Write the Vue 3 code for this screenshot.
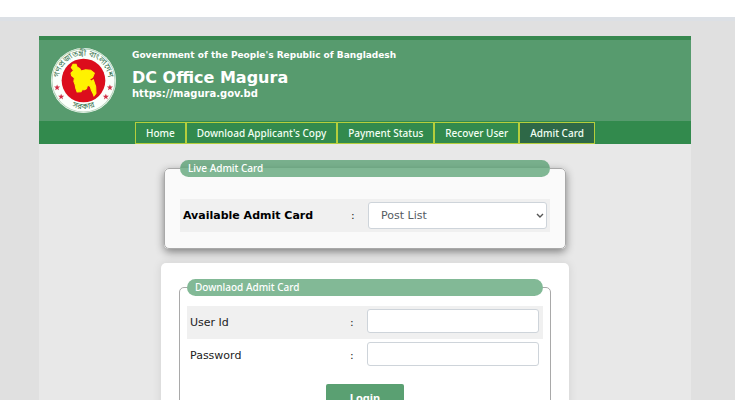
<script setup>
import { ref } from "vue";

const navItems = [
    { label: "Home", active: false },
    { label: "Download Applicant's Copy", active: false },
    { label: "Payment Status", active: false },
    { label: "Recover User", active: false },
    { label: "Admit Card", active: true },
];

const stars = [
    { x: 6, y: 39 },
    { x: 10, y: 48 },
    { x: 58, y: 39 },
    { x: 54, y: 48 },
];

const post = ref("");
const userId = ref("");
const password = ref("");
</script>

<template>
    <div class="page">
        <div class="wrapper">
            <header class="header">
                <svg
                    class="logo"
                    viewBox="0 0 64 64"
                    role="img"
                    aria-label="Government seal"
                >
                    <defs>
                        <path id="seal-top" d="M7.8 36 A24.5 24.5 0 1 1 56.2 36" />
                        <path id="seal-bottom" d="M8 47 A28.5 28.5 0 0 0 56 47" />
                    </defs>
                    <circle cx="32" cy="32" r="32" fill="#fbfffb" />
                    <circle
                        cx="32"
                        cy="32"
                        r="31"
                        fill="none"
                        stroke="#b7d5bd"
                        stroke-width="1"
                    />
                    <circle cx="32" cy="32" r="21.5" fill="#dc0d1c" />
                    <path
                        d="M21.7 16 L24.7 16 L25.7 18.7 L28.3 20.2 L29.7 22.7 L34 21.5 L39 22 L42.7 24.7 L41 29 L38.3 30.7 L39 33 L41.7 31.3 L44 38 L44.3 44.7 L42.3 47.3 L41 44 L39.7 41.3 L38.7 38 L36 36.5 L35 40 L33 41 L30.7 41 L29.5 43 L25.7 43.3 L24.5 40 L23.7 36 L22.5 33 L23 29.5 L20.3 27.3 L19.7 24.7 L22.3 22 L20 19.3 Z"
                        fill="#fff200"
                        stroke="#fff200"
                        stroke-width="1"
                    />
                    <text class="seal-text">
                        <textPath
                            href="#seal-top"
                            startOffset="50%"
                            text-anchor="middle"
                        >গণপ্রজাতন্ত্রী বাংলাদেশ</textPath>
                    </text>
                    <text class="seal-text">
                        <textPath
                            href="#seal-bottom"
                            startOffset="50%"
                            text-anchor="middle"
                        >সরকার</textPath>
                    </text>
                    <path
                        v-for="star in stars"
                        :key="`${star.x}-${star.y}`"
                        :transform="`translate(${star.x} ${star.y})`"
                        d="M0 -3 L0.8 -1 L3 -1 L1.2 0.5 L1.9 2.6 L0 1.3 L-1.9 2.6 L-1.2 0.5 L-3 -1 L-0.8 -1 Z"
                        fill="#cf2f45"
                    />
                </svg>
                <div class="titles">
                    <p class="title-small title-gov">
                        Government of the People's Republic of Bangladesh
                    </p>
                    <h1 class="title">DC Office Magura</h1>
                    <p class="title-small">https://magura.gov.bd</p>
                </div>
            </header>

            <nav class="nav">
                <a
                    v-for="item in navItems"
                    :key="item.label"
                    href="#"
                    class="nav-link"
                    :class="{ 'nav-link-active': item.active }"
                    >{{ item.label }}</a
                >
            </nav>

            <main class="content">
                <fieldset class="panel live-panel">
                    <legend class="legend">Live Admit Card</legend>
                    <div class="row row-shaded row-live">
                        <label class="label label-bold" for="post"
                            >Available Admit Card</label
                        >
                        <span class="colon">:</span>
                        <span class="select-wrap">
                            <select id="post" v-model="post" class="control select">
                                <option value="">Post List</option>
                            </select>
                            <svg class="chevron" viewBox="0 0 8 6" aria-hidden="true">
                                <path
                                    d="M1 1 L4 4 L7 1"
                                    fill="none"
                                    stroke="#555"
                                    stroke-width="1.4"
                                />
                            </svg>
                        </span>
                    </div>
                </fieldset>

                <form class="card" @submit.prevent>
                    <fieldset class="panel login-panel">
                        <legend class="legend">Downlaod Admit Card</legend>
                        <div class="row row-shaded">
                            <label class="label" for="user-id">User Id</label>
                            <span class="colon">:</span>
                            <input
                                id="user-id"
                                v-model="userId"
                                class="control text-input"
                                type="text"
                            />
                        </div>
                        <div class="row">
                            <label class="label" for="password">Password</label>
                            <span class="colon">:</span>
                            <input
                                id="password"
                                v-model="password"
                                class="control text-input"
                                type="password"
                            />
                        </div>
                        <button class="login" type="submit">Login</button>
                    </fieldset>
                </form>
            </main>
        </div>
    </div>
</template>

<style>
body {
    margin: 0;
    background: #e0e0e0;
}
</style>

<style scoped>
.page {
    border-top: 17px solid #ffffff;
    padding: 0 44px 0 39px;
    font-family: "DejaVu Sans", Verdana, sans-serif;
    box-shadow: inset 0 4px 0 #dce0e5;
    background: #e0e0e0;
}

.wrapper {
    border-top: 19px solid transparent;
    background: #e8e8e8;
    background-clip: padding-box;
}

.header {
    display: flex;
    align-items: flex-start;
    gap: 16px;
    height: 73px;
    padding: 8px 12px 0;
    border-top: 4px solid #37884f;
    background: #579b6e;
}

.logo {
    flex: none;
    width: 65px;
    height: 65px;
}

.seal-text {
    font-family: "Noto Sans Bengali", "Noto Sans", sans-serif;
    font-size: 8px;
    fill: #3c7551;
}

.titles {
    color: #ffffff;
}

.title-small {
    margin: 0;
    font-size: 10px;
    font-weight: 700;
    line-height: 14px;
}

.title-gov {
    font-size: 9px;
}

.title {
    margin: 7px 0 0;
    font-size: 16px;
    font-weight: 700;
    line-height: 18px;
}

.nav {
    display: flex;
    height: 22px;
    padding: 1px 0 0 96px;
    background: #328a4d;
}

.nav-link {
    padding: 0 10px;
    border: 1px solid #b5ce3c;
    color: #f2fff4;
    font-family: "Noto Sans", sans-serif;
    font-size: 10px;
    font-weight: 500;
    line-height: 20px;
    text-decoration: none;
}

.nav-link-active {
    background: #2e6847;
}

.content {
    max-width: 408px;
    margin: 0 auto;
    padding: 16px 0 24px;
}

.panel {
    min-width: 0;
    margin: 0;
    border: 1px solid #a9a9a9;
    border-radius: 5px;
}

.live-panel {
    margin: 0 3px;
    padding: 22px 15px 16px;
    background: #fafafa;
    box-shadow: 0 3px 8px rgba(0, 0, 0, 0.45);
}

.legend {
    box-sizing: border-box;
    width: 100%;
    padding: 0 8px;
    border-radius: 9px;
    background: rgba(46, 139, 80, 0.6);
    color: #ffffff;
    font-family: "Noto Sans", sans-serif;
    font-size: 10px;
    font-weight: 500;
    line-height: 17px;
}

.row {
    display: flex;
    align-items: center;
    height: 33px;
    padding: 0 4px 0 3px;
    font-size: 11px;
    color: #222222;
}

.row-live {
    padding-right: 3px;
}

.row-shaded {
    background: #f0f0f0;
}

.label {
    flex: 1;
}

.label-bold {
    font-weight: 700;
    color: #000000;
}

.colon {
    width: 17px;
}

.control {
    box-sizing: border-box;
    padding: 0 12px;
    border: 1px solid #ced4da;
    border-radius: 3px;
    background: #ffffff;
    color: #555b61;
    font-family: inherit;
    font-size: 11px;
}

.text-input {
    align-self: flex-start;
    width: 172px;
    height: 24px;
    margin-top: 3px;
}

.select-wrap {
    position: relative;
    display: flex;
}

.select {
    width: 179px;
    height: 27px;
    appearance: none;
}

.chevron {
    position: absolute;
    top: 11px;
    right: 3px;
    width: 8px;
    height: 6px;
    pointer-events: none;
}

.card {
    margin-top: 14px;
    padding: 16px 18px 20px;
    border-radius: 5px;
    background: #ffffff;
    box-shadow: 0 0 10px rgba(0, 0, 0, 0.1);
}

.login-panel {
    padding: 10px 7px 16px;
}

.login {
    display: block;
    width: 78px;
    height: 27px;
    margin: 12px auto 0;
    border: 0;
    border-radius: 2px;
    background: #5aa072;
    color: #ffffff;
    font-family: "Noto Sans", sans-serif;
    font-size: 11px;
    font-weight: 700;
}
</style>
